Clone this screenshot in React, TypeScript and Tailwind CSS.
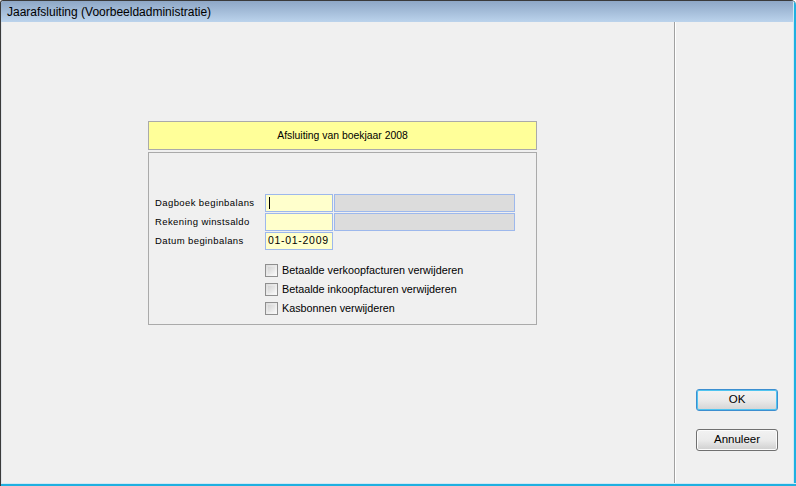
import React from 'react';

function Checkbox({ label }: { label: string }) {
    return (
        <label className="flex items-center gap-[4px] h-[19px]">
            <span className="w-[13px] h-[13px] border border-[#8f8f8f] bg-gradient-to-br from-[#dcdcdc] to-[#fafafa] p-[2px]">
                <span className="block w-full h-full bg-gradient-to-br from-[#d4d4d4] to-[#f4f4f4]" />
            </span>
            <span className="text-[10.8px] text-black leading-none">{label}</span>
        </label>
    );
}

export default function App() {
    return (
        <div className="w-[796px] h-[486px] flex flex-col bg-[#f0f0f0] border-l border-t border-[#3a3a3a] rounded-tl-[3px] rounded-tr-[5px] overflow-hidden font-['Liberation_Sans',Arial,sans-serif]">
            <div className="flex">
                <div className="flex-1 flex flex-col">
                    <div className="h-[21px] bg-gradient-to-b from-[#8ea7c6] to-[#bbd3ec] flex items-center pl-[6px] text-[12px] text-black">
                        Jaarafsluiting (Voorbeeldadministratie)
                    </div>
                </div>
                <div className="w-[3px] bg-[#1fb0e0] border-l border-[#d0e8f4]" />
            </div>
            <div className="flex flex-1">
                <div className="flex flex-1 border-l border-[#dfe3e8]">
                    <div className="flex-1 pl-[146px] pt-[99px]">
                        <div className="w-[389px] h-[29px] border border-[#aaaaaa] bg-[#ffff99] flex items-center justify-center text-[10.4px] text-black">
                            Afsluiting van boekjaar 2008
                        </div>
                        <div className="w-[389px] h-[173px] mt-[2px] border border-[#aaaaaa] pt-[41px] pl-[6px]">
                            <div className="flex flex-col gap-[1px]">
                                <div className="flex items-center h-[18px]">
                                    <span className="w-[110px] text-[9.5px] text-black tracking-[0.4px] whitespace-nowrap">Dagboek beginbalans</span>
                                    <div className="w-[68px] h-[18px] border border-[#9db8ec] bg-[#ffffcc] flex items-center pl-[3px]">
                                        <span className="w-px h-[12px] bg-black" />
                                    </div>
                                    <div className="w-[181px] h-[18px] ml-[1px] border border-[#9db8ec] bg-[#dcdcdc]" />
                                </div>
                                <div className="flex items-center h-[18px]">
                                    <span className="w-[110px] text-[9.5px] text-black tracking-[0.4px] whitespace-nowrap">Rekening winstsaldo</span>
                                    <div className="w-[68px] h-[18px] border border-[#9db8ec] bg-[#ffffcc]" />
                                    <div className="w-[181px] h-[18px] ml-[1px] border border-[#9db8ec] bg-[#dcdcdc]" />
                                </div>
                                <div className="flex items-center h-[18px]">
                                    <span className="w-[110px] text-[9.5px] text-black tracking-[0.4px] whitespace-nowrap">Datum beginbalans</span>
                                    <div className="w-[68px] h-[18px] border border-[#9db8ec] bg-[#ffffcc] flex items-center pl-[2px] text-[10.5px] tracking-[0.7px] text-black">
                                        01-01-2009
                                    </div>
                                </div>
                            </div>
                            <div className="flex flex-col pl-[110px] pt-[11px]">
                                <Checkbox label="Betaalde verkoopfacturen verwijderen" />
                                <Checkbox label="Betaalde inkoopfacturen verwijderen" />
                                <Checkbox label="Kasbonnen verwijderen" />
                            </div>
                        </div>
                    </div>
                    <div className="w-[119px] border-l border-[#a0a0a0] flex">
                        <div className="w-px bg-white" />
                        <div className="flex-1 flex flex-col justify-end items-start pl-[20px] pb-[32px] gap-[18px]">
                            <button className="w-[82px] h-[22px] rounded-[3px] border border-[#3c8fd0] bg-gradient-to-b from-[#f2f2f2] via-[#ebebeb] to-[#d4d4d4] shadow-[inset_0_0_0_1px_#4fc4f0] text-[11.5px] text-black">
                                OK
                            </button>
                            <button className="w-[82px] h-[22px] rounded-[3px] border border-[#707070] bg-gradient-to-b from-[#f2f2f2] via-[#ebebeb] to-[#cfcfcf] shadow-[inset_0_0_0_1px_#fcfcfc] text-[11.5px] text-black">
                                Annuleer
                            </button>
                        </div>
                    </div>
                </div>
                <div className="w-[3px] bg-[#1fb0e0] border-l border-[#d0e8f4]" />
            </div>
            <div className="h-[3px] bg-[#1fb0e0] border-t border-[#d0e8f4]" />
        </div>
    );
}
